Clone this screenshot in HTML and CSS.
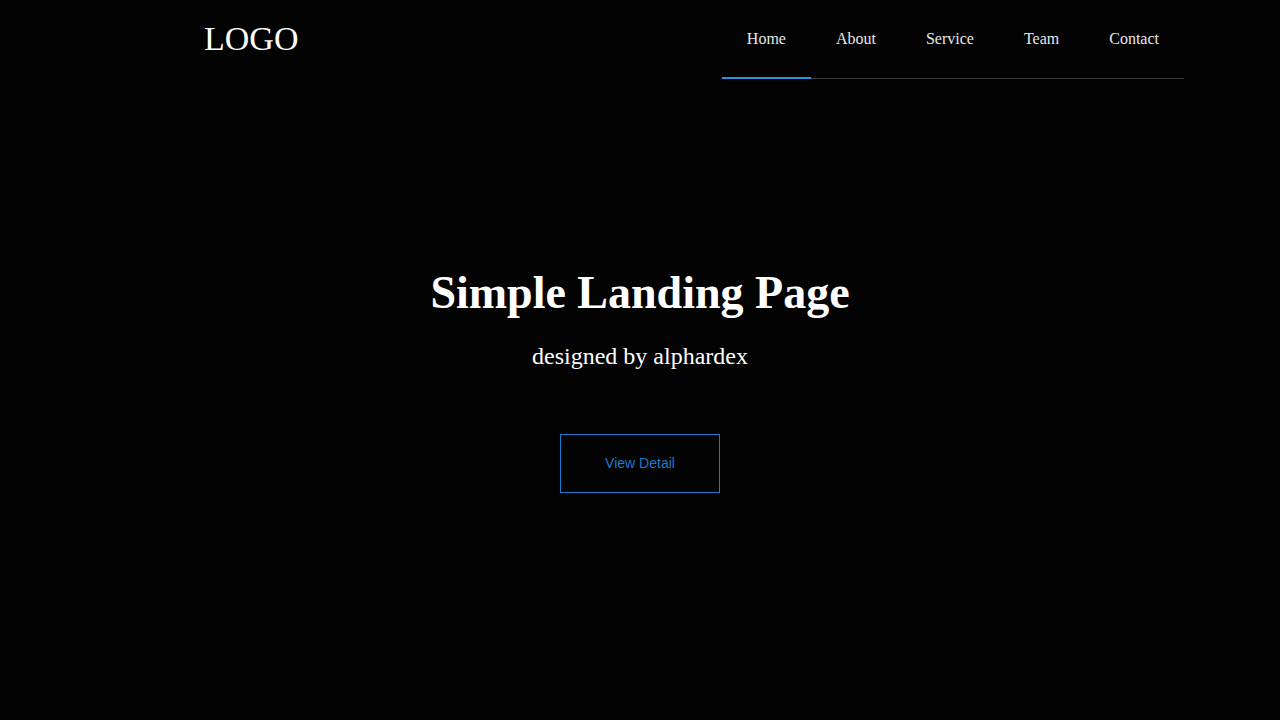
FILE: index.html
```html
<!DOCTYPE html>
<html>
<head>
<meta charset="utf-8">
<title>Simple Landing Page</title>
<link rel="stylesheet" href="styles.css">
</head>
<body>
<header class="header">
  <div class="logo">LOGO</div>
  <nav class="nav">
    <a class="nav-item active" href="#">Home</a>
    <a class="nav-item" href="#">About</a>
    <a class="nav-item" href="#">Service</a>
    <a class="nav-item" href="#">Team</a>
    <a class="nav-item" href="#">Contact</a>
  </nav>
</header>
<main class="hero">
  <h1 class="title">Simple Landing Page</h1>
  <p class="subtitle">designed by alphardex</p>
  <a class="btn" href="#">View Detail</a>
</main>
</body>
</html>
```
FILE: styles.css
```css
html, body {
  margin: 0;
  padding: 0;
  background: #030303;
  color: #fff;
  font-family: "Liberation Serif", "Times New Roman", serif;
  height: 100%;
}
.header {
  display: flex;
  justify-content: space-between;
  align-items: flex-start;
  padding: 0 96px 0 204px;
}
.logo {
  font-size: 34px;
  line-height: 78px;
  color: #fff;
}
.nav {
  display: flex;
  border-bottom: 1px solid #3a3a3a;
}
.nav-item {
  display: block;
  padding: 0 25px;
  height: 77px;
  line-height: 77px;
  font-size: 16px;
  color: #e8e8e8;
  text-decoration: none;
  border-bottom: 2px solid transparent;
  margin-bottom: -1px;
}
.nav-item.active {
  border-bottom-color: #2e8fe0;
}
.hero {
  display: flex;
  flex-direction: column;
  align-items: center;
  padding-top: 185px;
}
.title {
  margin: 0;
  font-size: 46px;
  font-weight: bold;
  line-height: 58px;
}
.subtitle {
  margin: 19px 0 0;
  font-size: 24px;
  line-height: 30px;
}
.btn {
  margin-top: 63px;
  width: 158px;
  height: 57px;
  line-height: 57px;
  text-align: center;
  border: 1px solid #1a7ad0;
  color: #1a7ad0;
  font-family: "Liberation Sans", Arial, sans-serif;
  font-size: 14px;
  text-decoration: none;
}
```
